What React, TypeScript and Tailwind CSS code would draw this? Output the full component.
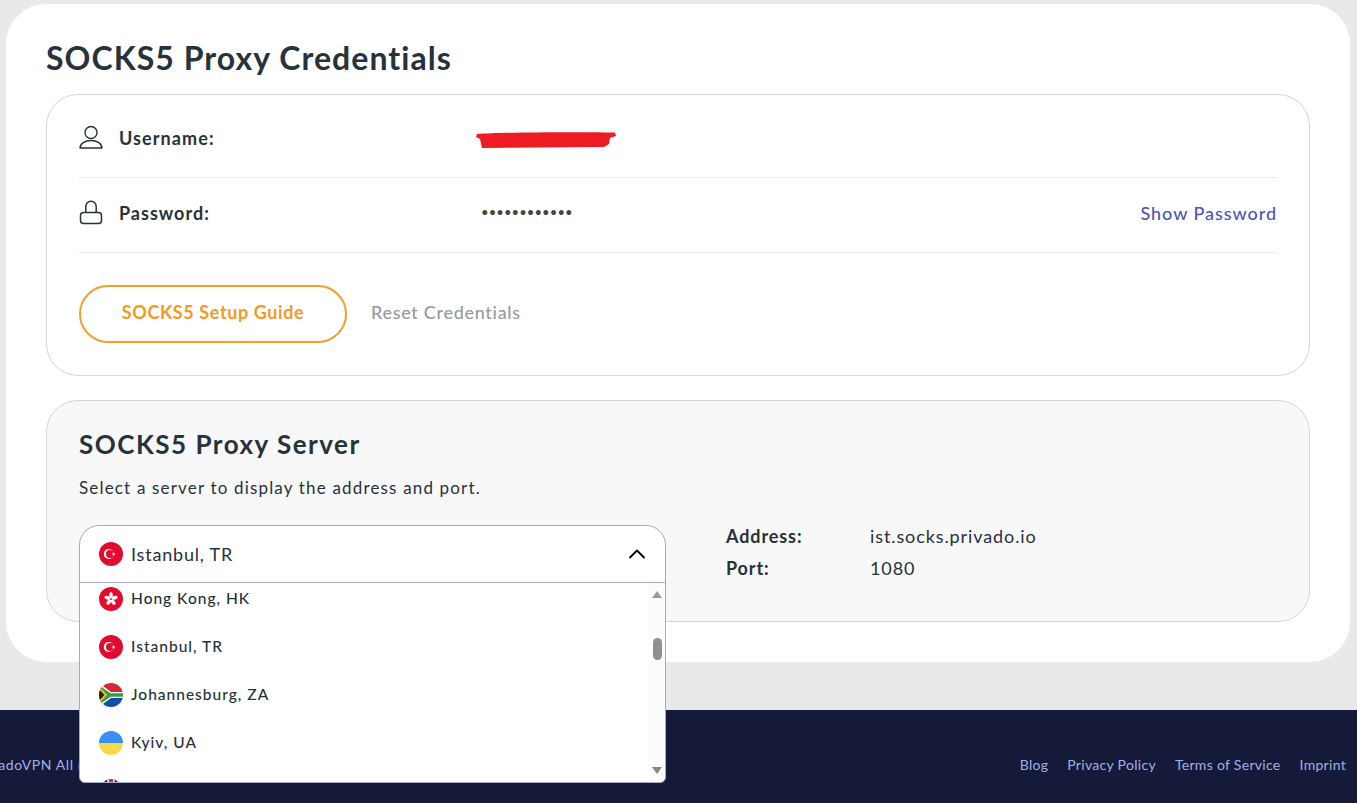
import { ChevronUp } from 'lucide-react';

function TurkeyFlag() {
  return (
    <svg viewBox="0 0 24 24" className="w-6 h-6 shrink-0">
      <circle cx="12" cy="12" r="12" fill="#e30a2f" />
      <circle cx="9.800" cy="12" r="5" fill="#fff" />
      <circle cx="11" cy="12" r="4" fill="#e30a2f" />
      <path d="M14.600 9.900l.5 1.500 1.600 0-1.300.9.5 1.500-1.300-.9-1.300.9.5-1.500-1.300-.9 1.600 0z" fill="#fff" />
    </svg>
  );
}

function HongKongFlag() {
  return (
    <svg viewBox="0 0 24 24" className="w-6 h-6 shrink-0">
      <circle cx="12" cy="12" r="12" fill="#e30a2f" />
      <g fill="#fff">
        <ellipse cx="12" cy="8.200" rx="1.800" ry="3" />
        <ellipse cx="12" cy="8.200" rx="1.800" ry="3" transform="rotate(72 12 12)" />
        <ellipse cx="12" cy="8.200" rx="1.800" ry="3" transform="rotate(144 12 12)" />
        <ellipse cx="12" cy="8.200" rx="1.800" ry="3" transform="rotate(216 12 12)" />
        <ellipse cx="12" cy="8.200" rx="1.800" ry="3" transform="rotate(288 12 12)" />
      </g>
    </svg>
  );
}

function SouthAfricaFlag() {
  return (
    <svg viewBox="0 0 24 24" className="w-6 h-6 shrink-0">
      <defs>
        <clipPath id="za-clip">
          <circle cx="12" cy="12" r="12" />
        </clipPath>
      </defs>
      <g clipPath="url(#za-clip)">
        <rect width="24" height="12" fill="#d5263c" />
        <rect y="12" width="24" height="12" fill="#0f4fa8" />
        <path d="M0 0L12 9H24V15H12L0 24Z" fill="#fff" />
        <path d="M-1 1.500L11.500 10.300H24V13.700H11.500L-1 22.500Z" fill="#3f9a3c" />
        <path d="M0 3.500L8 12 0 20.500Z" fill="#f5c32c" />
        <path d="M0 6L5.500 12 0 18Z" fill="#2a2118" />
      </g>
    </svg>
  );
}

function UkraineFlag() {
  return (
    <svg viewBox="0 0 24 24" className="w-6 h-6 shrink-0">
      <defs>
        <clipPath id="ua-clip">
          <circle cx="12" cy="12" r="12" />
        </clipPath>
      </defs>
      <g clipPath="url(#ua-clip)">
        <rect width="24" height="12" fill="#3a8ff0" />
        <rect y="12" width="24" height="12" fill="#fbd84a" />
      </g>
    </svg>
  );
}

function UkFlag() {
  return (
    <svg viewBox="0 0 24 24" className="w-6 h-6 shrink-0">
      <defs>
        <clipPath id="uk-clip">
          <circle cx="12" cy="12" r="12" />
        </clipPath>
      </defs>
      <g clipPath="url(#uk-clip)">
        <rect width="24" height="24" fill="#23408e" />
        <path d="M0 0L24 24M24 0L0 24" stroke="#fff" strokeWidth="4" />
        <path d="M12 0V24M0 12H24" stroke="#fff" strokeWidth="7" />
        <path d="M12 0V24M0 12H24" stroke="#d5263c" strokeWidth="4" />
      </g>
    </svg>
  );
}

function UserIcon() {
  return (
    <svg viewBox="0 0 24 26" className="w-6 h-[26px] shrink-0" fill="none" stroke="#27323a" strokeWidth="1.4">
      <circle cx="12" cy="9.500" r="6" />
      <path d="M1 25c0-4.500 5-7.500 11-7.500s11 3 11 7.500z" strokeLinejoin="round" />
    </svg>
  );
}

function LockIcon() {
  return (
    <svg viewBox="0 0 24 26" className="w-6 h-[26px] shrink-0 -mt-[2px]" fill="none" stroke="#27323a" strokeWidth="1.5">
      <rect x="1.500" y="13.500" width="21" height="11" rx="3" />
      <path d="M6.800 13.500V7.500a5.200 5.200 0 0 1 10.400 0v6" />
    </svg>
  );
}

function RedactScribble() {
  return (
    <svg viewBox="0 0 140 18" className="w-[140px] h-[18px] -ml-[5px] mt-2">
      <path
        d="M1 3C30 1 100 1 139 1.500L140 5 134 7 133 13 128 16 6 17 4 8 0 6Z"
        fill="#ed1c24"
      />
    </svg>
  );
}

const servers = [
  { name: 'Hong Kong, HK', flag: <HongKongFlag /> },
  { name: 'Istanbul, TR', flag: <TurkeyFlag /> },
  { name: 'Johannesburg, ZA', flag: <SouthAfricaFlag /> },
  { name: 'Kyiv, UA', flag: <UkraineFlag /> },
  { name: 'London, UK', flag: <UkFlag /> },
];

function ServerDropdown() {
  return (
    <div className="absolute left-0 top-0 w-[587px] h-[258px] z-10 flex flex-col bg-white border border-[#a9a8c6] rounded-t-[20px] rounded-b-[6px] overflow-hidden">
      <div className="h-[57px] shrink-0 flex items-center pl-[19px] pr-[14px] border-b border-[#a9a8c6]">
        <TurkeyFlag />
        <span className="ml-2 text-[18px] tracking-[0.8px] text-[#27323a]">Istanbul, TR</span>
        <ChevronUp className="ml-auto w-7 h-7 text-black" strokeWidth={1.6} />
      </div>
      <div className="relative flex-1 overflow-hidden">
        <div className="-mt-[8px] pl-[19px] flex flex-col">
          {servers.map((s) => (
            <div key={s.name} className="h-12 shrink-0 flex items-center">
              {s.flag}
              <span className="ml-2 text-[15.5px] font-medium tracking-[1px] text-[#27323a]">{s.name}</span>
            </div>
          ))}
        </div>
        {/* scrollbar */}
        <div className="absolute right-0 top-0 bottom-0 w-4 bg-[#fcfcfc] flex flex-col items-center justify-between pt-2 pb-2">
          <div className="w-0 h-0 border-x-[5px] border-x-transparent border-b-[7px] border-b-[#999]" />
          <div className="w-0 h-0 border-x-[5px] border-x-transparent border-t-[7px] border-t-[#888]" />
        </div>
        <div className="absolute right-[3px] top-[55px] w-[9px] h-[22px] rounded-full bg-[#8f8f8f]" />
      </div>
    </div>
  );
}

export default function App() {
  return (
    <div className="h-[803px] overflow-hidden flex flex-col bg-[#e8e9ea] font-['Lato','Liberation_Sans',sans-serif] text-[#27323a]">
      <main className="ml-[6px] mr-[7px] mt-1 h-[658px] shrink-0 bg-white rounded-[40px] px-10 pt-[32px]">
        <h1 className="text-[32px] leading-[44px] font-bold tracking-[1.05px]">SOCKS5 Proxy Credentials</h1>

        <section className="mt-[14px] h-[282px] border border-[#d6d6d6] rounded-[32px] px-8">
          <div className="h-[83px] flex items-center border-b border-[#ececec]">
            <UserIcon />
            <span className="ml-4 w-[362px] mt-1 text-[18px] font-bold tracking-[1.1px]">Username:</span>
            <RedactScribble />
          </div>
          <div className="h-[75px] flex items-center border-b border-[#ececec] pb-1">
            <LockIcon />
            <span className="ml-4 w-[362px] text-[18px] font-bold tracking-[1px]">Password:</span>
            <span className="text-[13px] tracking-[0.1px] text-[#444]">••••••••••••</span>
            <a className="ml-auto text-[18px] font-medium tracking-[0.95px] text-[#4c55b5]">Show Password</a>
          </div>
          <div className="mt-[32px] flex items-center gap-6">
            <a className="w-[268px] h-[58px] pb-1 flex items-center justify-center rounded-full border-2 border-[#f0a030] text-[18px] font-bold tracking-[0.6px] text-[#f39a1f]">
              SOCKS5 Setup Guide
            </a>
            <a className="pb-1 text-[18px] font-medium tracking-[0.7px] text-[#979a9c]">Reset Credentials</a>
          </div>
        </section>

        <section className="mt-6 h-[222px] border border-[#d6d6d6] rounded-[32px] bg-[#f8f8f8] px-8 pt-[24px]">
          <h2 className="text-[26px] leading-[38px] font-bold tracking-[1.5px]">SOCKS5 Proxy Server</h2>
          <p className="mt-[13px] text-[17px] leading-6 tracking-[1.17px]">Select a server to display the address and port.</p>
          <div className="relative mt-[25px] flex">
            <ServerDropdown />
            <div className="ml-[647px] -mt-px grid grid-cols-[144px_1fr] gap-y-[8px] text-[18px] leading-6 tracking-[0.9px]">
              <span className="font-bold">Address:</span>
              <span>ist.socks.privado.io</span>
              <span className="font-bold">Port:</span>
              <span>1080</span>
            </div>
          </div>
        </section>
      </main>

      <footer className="mt-auto h-[93px] shrink-0 bg-[#151a38] flex items-center justify-between pr-[11px] pt-4 text-[14px] tracking-[0.3px] text-[#a3aee6]">
        <span className="-ml-[28px] tracking-[0.6px]">PrivadoVPN All rights reserved</span>
        <nav className="flex gap-[19px]">
          <a>Blog</a>
          <a>Privacy Policy</a>
          <a>Terms of Service</a>
          <a>Imprint</a>
        </nav>
      </footer>
    </div>
  );
}
